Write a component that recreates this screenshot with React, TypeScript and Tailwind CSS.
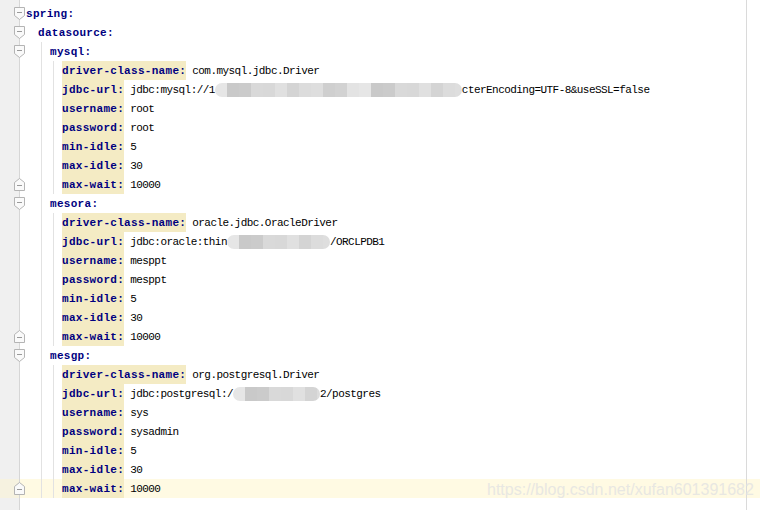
import React from "react";

type Row = {
  level: 0 | 1 | 2 | 3;
  k: string;
  v?: React.ReactNode;
  fold?: "start" | "end";
  current?: boolean;
};

const shades = ["#d9d9d9", "#d2d2d2", "#e0e0e0", "#e6e6e6", "#dcdcdc", "#cbcbcb", "#cfcfcf", "#d8d8d8", "#e3e3e3", "#d4d4d4", "#c9c9c9", "#dedede"];

function Blur({ width }: { width: number }) {
  const n = Math.ceil(width / 12);
  return (
    <span className="inline-flex h-[14px] overflow-hidden rounded-full align-middle" style={{ width }}>
      {Array.from({ length: n }).map((_, i) => (
        <span key={i} className="h-full w-[12px] shrink-0" style={{ background: shades[(i * 7 + 3) % shades.length] }} />
      ))}
    </span>
  );
}

const leaves = (driver: string, url: React.ReactNode, user: string, pass: string, current = false): Row[] => [
  { level: 3, k: "driver-class-name", v: driver },
  { level: 3, k: "jdbc-url", v: url },
  { level: 3, k: "username", v: user },
  { level: 3, k: "password", v: pass },
  { level: 3, k: "min-idle", v: "5" },
  { level: 3, k: "max-idle", v: "30" },
  { level: 3, k: "max-wait", v: "10000", fold: "end", current },
];

const rows: Row[] = [
  { level: 0, k: "spring", fold: "start" },
  { level: 1, k: "datasource", fold: "start" },
  { level: 2, k: "mysql", fold: "start" },
  ...leaves(
    "com.mysql.jdbc.Driver",
    <>
      jdbc:mysql://1<Blur width={247} />cterEncoding=UTF-8&amp;useSSL=false
    </>,
    "root",
    "root"
  ),
  { level: 2, k: "mesora", fold: "start" },
  ...leaves(
    "oracle.jdbc.OracleDriver",
    <>
      jdbc:oracle:thin<Blur width={103} />/ORCLPDB1
    </>,
    "mesppt",
    "mesppt"
  ),
  { level: 2, k: "mesgp", fold: "start" },
  ...leaves(
    "org.postgresql.Driver",
    <>
      jdbc:postgresql:/<Blur width={87} />2/postgres
    </>,
    "sys",
    "sysadmin",
    true
  ),
];

function FoldMark({ kind }: { kind: "start" | "end" }) {
  const d = kind === "start" ? "M0.5 0.5 H10.5 V8.5 L5.5 12.5 L0.5 8.5 Z" : "M0.5 12.5 H10.5 V4.5 L5.5 0.5 L0.5 4.5 Z";
  const y = kind === "start" ? 5.5 : 7.5;
  return (
    <svg width="11" height="13" viewBox="0 0 11 13" className="absolute left-[14px] top-[3px] z-10">
      <path d={d} fill="#fafafa" stroke="#b4b4b4" />
      <path d={`M3 ${y} H8`} stroke="#9a9a9a" />
    </svg>
  );
}

function Key({ name, leaf }: { name: string; leaf: boolean }) {
  return (
    <span className={`h-full flex items-center pt-px font-bold text-[#000080] tracking-[0.3px] ${leaf ? "bg-[#f4ebc4]" : ""}`}>
      {name}:
    </span>
  );
}

function Line({ row }: { row: Row }) {
  const key = <Key name={row.k} leaf={row.level === 3} />;
  const val = row.v !== undefined && (
    <span className="ml-[6px] pt-px whitespace-pre text-black tracking-[-0.55px] flex items-center">{row.v}</span>
  );
  let body: React.ReactNode;
  if (row.level === 0) body = <div className="flex h-full pl-[6px]">{key}</div>;
  else if (row.level === 1) body = <div className="flex h-full pl-[18px]">{key}</div>;
  else if (row.level === 2)
    body = (
      <div className="flex h-full pl-[21px]">
        <div className="flex h-full border-l border-[#e2e2e2] pl-[8px]">{key}</div>
      </div>
    );
  else
    body = (
      <div className="flex h-full pl-[21px]">
        <div className="h-full w-[12px] border-l border-[#e2e2e2]" />
        <div className="flex h-full border-l border-[#e2e2e2] pl-[8px]">
          {key}
          {val}
        </div>
      </div>
    );

  return (
    <div className={`flex h-[19px] ${row.current ? "bg-[#fffae3]" : ""}`}>
      <div className={`relative w-[20px] shrink-0 border-r border-[#d6d6d6] ${row.current ? "bg-[#f6f2e0]" : "bg-[#f0f0f0]"}`}>
        {row.fold && <FoldMark kind={row.fold} />}
      </div>
      <div className="w-[726px] shrink-0">{body}</div>
      <div className="flex-1 border-l border-[#dadada]" />
    </div>
  );
}

function Filler({ h }: { h: string }) {
  return (
    <div className={`flex ${h}`}>
      <div className="w-[20px] shrink-0 border-r border-[#d6d6d6] bg-[#f0f0f0]" />
      <div className="w-[726px] shrink-0" />
      <div className="flex-1 border-l border-[#dadada]" />
    </div>
  );
}

export default function App() {
  return (
    <div className="relative w-[760px] h-[510px] overflow-hidden bg-white font-['Liberation_Mono',monospace] text-[11px] leading-none">
      <Filler h="h-[4px]" />
      {rows.map((r, i) => (
        <Line key={i} row={r} />
      ))}
      <Filler h="h-[20px]" />
      <span className="absolute left-[487px] top-[482px] font-['Liberation_Sans',sans-serif] text-[16px] text-[#e2e2e2]/80">
        https://blog.csdn.net/xufan601391682
      </span>
    </div>
  );
}
